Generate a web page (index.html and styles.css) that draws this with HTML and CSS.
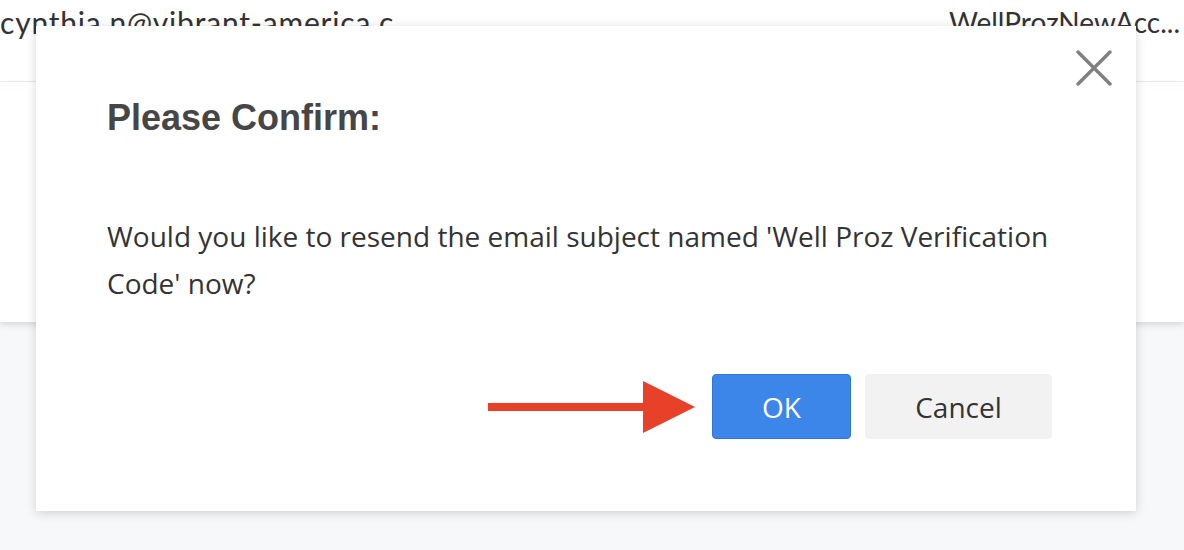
FILE: index.html
```html
<!DOCTYPE html>
<html>
<head>
<meta charset="utf-8">
<link rel="stylesheet" href="styles.css">
</head>
<body>
<div class="page">
  <header class="topbar">
    <span class="user">cynthia.n@vibrant-america.c</span>
    <span class="account">WellProzNewAcc...</span>
  </header>
  <section class="panel"></section>
</div>
<div class="modal">
  <button class="close" aria-label="Close">
    <svg width="36" height="36" viewBox="0 0 36 36"><path d="M2 2 L34 34 M34 2 L2 34" stroke="#808080" stroke-width="3.4" stroke-linecap="round" fill="none"/></svg>
  </button>
  <h2 class="title">Please Confirm:</h2>
  <p class="message">Would you like to resend the email subject named 'Well Proz Verification Code' now?</p>
  <div class="actions">
    <svg class="arrow" width="207" height="52" viewBox="0 0 207 52"><rect x="0" y="22" width="160" height="8" fill="#e8412a"/><polygon points="155,0 207,26 155,52" fill="#e8412a"/></svg>
    <button class="btn btn-ok">OK</button>
    <button class="btn btn-cancel">Cancel</button>
  </div>
</div>
</body>
</html>
```
FILE: styles.css
```css
html, body {
  margin: 0;
  padding: 0;
}
body {
  background: #f7f8fa;
  font-family: "Open Sans", "Noto Sans", sans-serif;
  color: #333;
  width: 1184px;
  height: 550px;
  overflow: hidden;
  position: relative;
}
.topbar {
  height: 82px;
  background: #fff;
  border-bottom: 1px solid #e9eef4;
  display: flex;
  justify-content: space-between;
  align-items: flex-start;
  font-family: Lato, "Open Sans", sans-serif;
  font-size: 30px;
  color: #333;
  line-height: 40px;
  padding: 2px 4px 0 0;
  box-sizing: border-box;
  white-space: nowrap;
}
.user {
  letter-spacing: 0.8px;
}
.account {
  font-size: 28px;
}
.panel {
  height: 240px;
  background: #fff;
  box-shadow: 0 3px 6px rgba(0, 0, 0, 0.12);
}
.modal {
  position: absolute;
  left: 36px;
  top: 26px;
  width: 1100px;
  height: 485px;
  background: #fff;
  box-shadow: 0 2px 10px rgba(0, 0, 0, 0.16);
  box-sizing: border-box;
  padding: 72px 84px 0 71px;
}
.close {
  position: absolute;
  top: 24px;
  right: 24px;
  width: 36px;
  height: 36px;
  padding: 0;
  border: 0;
  background: none;
}
.close svg {
  display: block;
}
.title {
  margin: 0;
  font-family: "Liberation Sans", Arial, sans-serif;
  font-weight: bold;
  font-size: 36px;
  line-height: 40px;
  color: #464646;
}
.message {
  margin: 75px 0 0;
  font-size: 28px;
  line-height: 47px;
  color: #333;
}
.actions {
  display: flex;
  justify-content: flex-end;
  align-items: center;
  margin-top: 67px;
}
.arrow {
  margin-right: 17px;
}
.btn {
  height: 65px;
  border-radius: 4px;
  font-family: "Open Sans", "Noto Sans", sans-serif;
  font-size: 28px;
  padding: 0;
}
.btn-ok {
  width: 139px;
  background: #3b86e8;
  border: 1px solid #2f76d6;
  color: #fff;
}
.btn-cancel {
  width: 187px;
  margin-left: 14px;
  background: #f2f2f2;
  border: 1px solid #f2f2f2;
  color: #333;
}
```
